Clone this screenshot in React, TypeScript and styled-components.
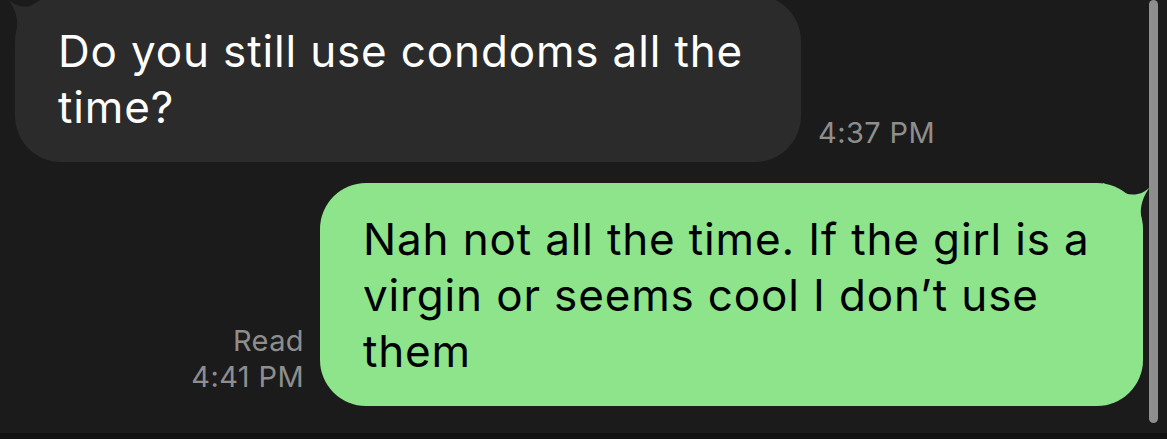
import React from 'react';
import styled, {createGlobalStyle} from 'styled-components';

type Side = 'in' | 'out';

type Message = {
  id: number,
  side: Side,
  text: string,
  meta: string[],
};

const messages: Message[] = [
  {id: 1, side: 'in', text: 'Do you still use condoms all the time?', meta: ['4:37 PM']},
  {
    id: 2,
    side: 'out',
    text: 'Nah not all the time. If the girl is a virgin or seems cool I don\u2019t use them',
    meta: ['Read', '4:41 PM'],
  },
];

const GlobalStyle = createGlobalStyle`
  html, body {
    margin: 0;
    padding: 0;
    background: #1b1b1b;
  }
  body {
    font-family: Inter, 'Noto Sans', 'Liberation Sans', sans-serif;
  }
`;

const Screen = styled.div`
  position: relative;
  width: 1167px;
  height: 439px;
  overflow: hidden;
  background: #1b1b1b;
  display: flex;
  flex-direction: column;
`;

const Thread = styled.div`
  flex: 1;
  display: flex;
  flex-direction: column;
  gap: 21px;
  margin-top: -5px;
`;

const Row = styled.div<{ $side: Side }>`
  display: flex;
  align-items: flex-end;
  flex-direction: ${p => p.$side === 'in' ? 'row' : 'row-reverse'};
  gap: ${p => p.$side === 'in' ? '17px' : '16px'};
  padding: ${p => p.$side === 'in' ? '0 0 0 15px' : '0 24px 0 0'};
`;

const Bubble = styled.div<{ $side: Side }>`
  position: relative;
  box-sizing: border-box;
  width: ${p => p.$side === 'in' ? '786px' : '823px'};
  padding: 28px 36px 27px 43px;
  border-radius: 46px;
  background: ${p => p.$side === 'in' ? '#2b2b2b' : '#8de48a'};
  color: ${p => p.$side === 'in' ? '#ffffff' : '#000000'};
  font-size: 44px;
  line-height: 56px;
  letter-spacing: 0.85px;
`;

const Tail = styled.svg<{ $side: Side }>`
  position: absolute;
  top: 0;
  ${p => p.$side === 'in' ? 'left: -10px;' : 'right: -10px;'}
  width: 50px;
  height: 60px;
  overflow: visible;
`;

const Meta = styled.div<{ $side: Side }>`
  display: flex;
  flex-direction: column;
  align-items: ${p => p.$side === 'in' ? 'flex-start' : 'flex-end'};
  padding-bottom: 11px;
  color: #8e8e8e;
  font-size: 29px;
  line-height: 36px;
  letter-spacing: 0.4px;
  white-space: nowrap;
`;

const ScrollThumb = styled.div`
  position: absolute;
  top: 0;
  right: 9px;
  width: 9px;
  height: 423px;
  border-radius: 5px;
  background: #8e8e8e;
`;

const BottomEdge = styled.div`
  height: 6px;
  background: #121212;
`;

// bubble tail, drawn from the corner of the bubble outward
const outPath = 'M -40 0 C -28 4 -10 22 8 3 C 0 12 -3 24 -2 32 C -1 45 0 50 0 60 L -40 60 Z';
const inPath = 'M 40 0 C 28 4 10 22 -8 3 C 0 12 3 24 2 32 C 1 45 0 50 0 60 L 40 60 Z';

function BubbleTail({side, color}: { side: Side, color: string }) {
  return <Tail $side={side} viewBox={side === 'in' ? '-10 0 50 60' : '-40 0 50 60'}>
    <path d={side === 'in' ? inPath : outPath} fill={color} />
  </Tail>;
}

export default function App() {
  return <>
    <GlobalStyle />
    <Screen>
      <Thread>
        {messages.map(m => (
          <Row key={m.id} $side={m.side}>
            <Bubble $side={m.side}>
              <BubbleTail side={m.side} color={m.side === 'in' ? '#2b2b2b' : '#8de48a'} />
              {m.text}
            </Bubble>
            <Meta $side={m.side}>
              {m.meta.map(line => <span key={line}>{line}</span>)}
            </Meta>
          </Row>
        ))}
      </Thread>
      <BottomEdge />
      <ScrollThumb />
    </Screen>
  </>;
}
